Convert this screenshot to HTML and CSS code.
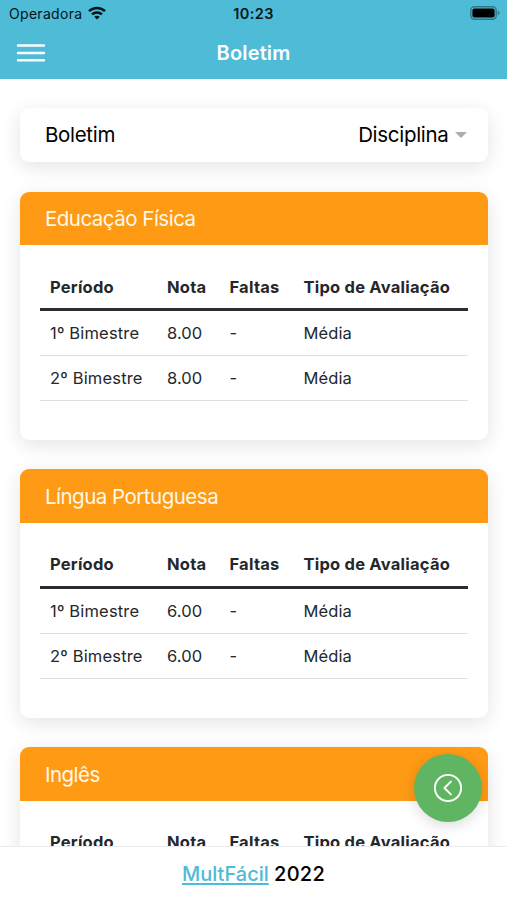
FILE: index.html
```html
<!DOCTYPE html>
<html lang="pt-BR">
<head>
<meta charset="utf-8">
<meta name="viewport" content="width=device-width, initial-scale=1">
<title>Boletim</title>
<link rel="stylesheet" href="styles.css">
</head>
<body>
<div class="app">
  <header class="header">
    <div class="status">
      <div class="carrier"><span class="carrier-name">Operadora</span>
        <svg class="wifi" viewBox="0 0 18 14" width="18" height="14"><g fill="none" stroke="#071418" stroke-width="2.5"><path d="M1 5.2C5.5.9 12.5.9 17 5.2"/><path d="M4 8.4c2.8-2.7 7.2-2.7 10 0"/></g><path d="M6.2 10.8c1.6-1.5 4-1.5 5.6 0L9 13.6z" fill="#071418"/></svg>
      </div>
      <span class="clock">10:23</span>
      <svg class="battery" viewBox="0 0 30 14" width="30" height="14"><rect x=".8" y=".8" width="25.4" height="12.4" rx="3.6" fill="none" stroke="#2f7789" stroke-width="1.4"/><rect x="2.4" y="2.4" width="22.2" height="9.2" rx="2" fill="#000"/><path d="M27.8 4.8c2.2.8 2.2 3.6 0 4.4z" fill="#2f7789"/></svg>
    </div>
    <div class="toolbar">
      <button class="menu" aria-label="Menu"><svg viewBox="0 0 30 20" width="30" height="20"><path d="M2 2.5h26M2 10h26M2 17.3h26" stroke="#fff" stroke-width="2.4" stroke-linecap="round"/></svg></button>
      <h1 class="title">Boletim</h1>
    </div>
  </header>
  <main class="content">
    <section class="card filter">
      <span class="filter-label">Boletim</span>
      <span class="select">Disciplina<i class="caret"></i></span>
    </section>
    <section class="card">
      <h2 class="card-head">Educação Física</h2>
      <table class="grades">
        <thead><tr><th class="c1">Período</th><th class="c2">Nota</th><th class="c3">Faltas</th><th>Tipo de Avaliação</th></tr></thead>
        <tbody><tr><td>1º Bimestre</td><td>8.00</td><td>-</td><td>Média</td></tr><tr><td>2º Bimestre</td><td>8.00</td><td>-</td><td>Média</td></tr></tbody>
      </table>
    </section>
    <section class="card">
      <h2 class="card-head">Língua Portuguesa</h2>
      <table class="grades">
        <thead><tr><th class="c1">Período</th><th class="c2">Nota</th><th class="c3">Faltas</th><th>Tipo de Avaliação</th></tr></thead>
        <tbody><tr><td>1º Bimestre</td><td>6.00</td><td>-</td><td>Média</td></tr><tr><td>2º Bimestre</td><td>6.00</td><td>-</td><td>Média</td></tr></tbody>
      </table>
    </section>
    <section class="card">
      <h2 class="card-head">Inglês</h2>
      <table class="grades">
        <thead><tr><th class="c1">Período</th><th class="c2">Nota</th><th class="c3">Faltas</th><th>Tipo de Avaliação</th></tr></thead>
      </table>
    </section>
  </main>
  <button class="fab" aria-label="Voltar"><svg viewBox="0 0 30 30" width="30" height="30" fill="none" stroke="#fff" stroke-width="1.9" stroke-linecap="round" stroke-linejoin="round"><circle cx="15" cy="15" r="13.1"/><path d="M17.9 8.6 11.4 15l6.5 6.4"/></svg></button>
  <footer class="footer"><a class="brand" href="#">MultFácil</a>&nbsp;<span class="year">2022</span></footer>
</div>
</body>
</html>
```
FILE: styles.css
```css
* { box-sizing: border-box; }
body { margin: 0; background: #fff; color: #000; font-family: Inter, "Liberation Sans", sans-serif; }
button { border: 0; padding: 0; background: none; }
.app { position: relative; display: flex; flex-direction: column; height: 900px; overflow: hidden; }
.header { flex: none; height: 79px; background: #4ebbd7; }
.status { display: grid; grid-template-columns: 1fr auto 1fr; align-items: center; height: 27px; padding: 0 7px 0 9px; color: #071418; }
.carrier { display: flex; align-items: center; gap: 6px; font-size: 14px; letter-spacing: .3px; }
.wifi { margin-top: -2px; }
.clock { margin-left: -2px; font-size: 14.5px; font-weight: 600; letter-spacing: .4px; }
.battery { justify-self: end; margin-top: -1px; }
.toolbar { display: grid; grid-template-columns: 46px 1fr 46px; align-items: center; height: 52px; }
.menu { display: flex; height: 20px; padding-left: 16px; }
.title { margin: 0; text-align: center; color: #fff; font-size: 20px; line-height: 24px; font-weight: 600; letter-spacing: .15px; }
.content { flex: 1; min-height: 0; overflow: hidden; display: flex; flex-direction: column; gap: 29.5px; padding: 29px 19.5px 0 20.4px; }
.card { flex: none; height: 248.25px; border-radius: 9px; background: #fff; box-shadow: 0 5px 20px rgba(0, 0, 0, .11); overflow: hidden; }
.filter { display: flex; align-items: center; justify-content: space-between; height: 54px; padding: 0 21px 1px 24.5px; font-size: 20.5px; letter-spacing: -.3px; }
.select { display: flex; align-items: center; gap: 6px; }
.caret { border: 6px solid transparent; border-top: 6px solid #adadad; border-bottom: 0; }
.card-head { display: flex; align-items: center; height: 53.5px; margin: 0 0 20px; padding: 1px 0 0 24.5px; background: #fe9a14; color: #fff8e8; font-size: 20.5px; font-weight: 400; letter-spacing: -.5px; }
.grades { width: 428px; margin-left: 19.6px; border-collapse: separate; border-spacing: 0; table-layout: fixed; color: #24272b; font-size: 16.5px; line-height: 24px; }
.grades th { height: 46px; padding: 0 0 0 10px; border-bottom: 3px solid #292d31; text-align: left; font-weight: 700; letter-spacing: .23px; white-space: nowrap; }
.grades td { height: 45px; padding: 0 0 0 10px; border-bottom: 1px solid #dee0e2; letter-spacing: .1px; }
.grades td:first-child { letter-spacing: .18px; }
.c1 { width: 117px; }
.c2 { width: 62.5px; }
.c3 { width: 74px; }
.fab { position: absolute; right: 25px; bottom: 78px; display: flex; align-items: center; justify-content: center; width: 68px; height: 68px; border-radius: 50%; background: #60b562; box-shadow: 0 4px 14px rgba(0, 0, 0, .14); }
.footer { flex: none; display: flex; align-items: center; justify-content: center; height: 54px; border-top: 1px solid #ececec; background: #fff; font-size: 20px; font-weight: 500; }
.brand { color: #4ebbd7; text-decoration: underline; text-underline-offset: 2px; }
.year { letter-spacing: .25px; }
```
